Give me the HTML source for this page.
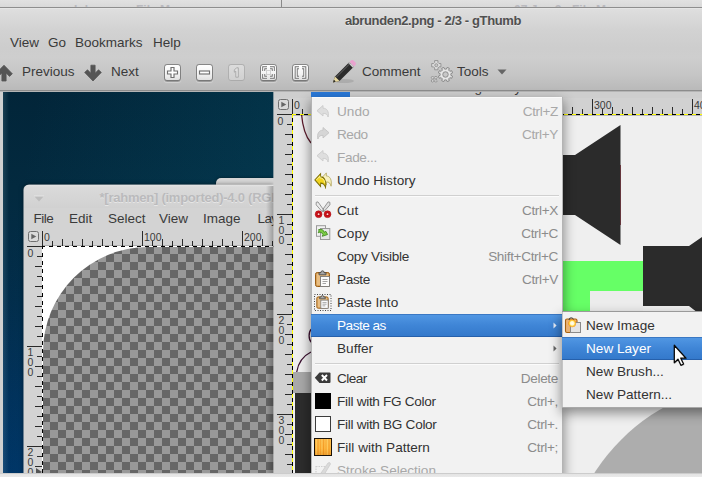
<!DOCTYPE html>
<html>
<head>
<meta charset="utf-8">
<title>abrunden2.png - 2/3 - gThumb</title>
<style>
html,body{margin:0;padding:0;}
body{width:702px;height:477px;overflow:hidden;background:#d6d6d6;font-family:"Liberation Sans","DejaVu Sans",sans-serif;}
#root{position:relative;width:702px;height:477px;overflow:hidden;background:#d6d6d6;}
#root div,#root span,#root svg{position:absolute;}
.t{white-space:nowrap;line-height:16px;font-size:13.5px;color:#3c3c3c;}
/* ---------- top strip ---------- */
#topstrip{left:0;top:0;width:702px;height:7px;background:linear-gradient(#e1e1e1,#d9d9d9);overflow:hidden;}
#topstrip .ft{font-size:12px;font-weight:bold;color:#b9b9be;top:2.500px;line-height:14px;white-space:nowrap;}
#topline{left:0;top:7px;width:702px;height:1px;background:#8e8e8e;}
#topnotch{left:281px;top:0;width:1px;height:7px;background:#8a8a8a;}
/* ---------- gThumb header ---------- */
#hdr{left:0;top:8px;width:702px;height:82px;background:linear-gradient(#ececec 0px,#dedede 1px,#d2d2d2 22px,#cdcdcd 40px,#cecece 50px,#c6c6c6 66px,#bababa 81px);}
#hdrline{left:0;top:90px;width:702px;height:2px;background:linear-gradient(#8c8c8c 0,#8c8c8c 1px,#b4b4b4 1px,#b4b4b4 2px);}
#title{left:333px;top:13px;width:200px;text-align:center;font-weight:bold;font-size:13px;letter-spacing:-0.36px;color:#505050;text-shadow:0 1px 0 rgba(255,255,255,.45);}
.mb{font-size:13.5px;color:#3a3a3a;}
.zb{top:64.500px;width:15px;height:15px;border-radius:2.500px;background:linear-gradient(#ffffff,#f4f4f4 55%,#e0e0e0);box-shadow:0 0 0 .9px rgba(105,105,105,.7),0 1.200px 0 .8px rgba(110,110,110,.55),0 2px 1px .5px rgba(255,255,255,.3);}
.zb.dis{background:linear-gradient(#dcdcdc,#d0d0d0);box-shadow:0 0 0 .9px rgba(150,150,150,.5);}
/* ---------- image area ---------- */
#imgarea{left:3px;top:92px;width:271px;height:381px;background:linear-gradient(90deg,rgba(160,205,220,.15) 0,rgba(160,205,220,0) 6px),linear-gradient(100deg,rgba(6,85,110,0) 10%,rgba(6,95,120,.30) 100%),linear-gradient(180deg,#022539 0%,#032a3f 25%,#022d4b 55%,#01315b 80%,#003466 100%);}
#imgleft{left:0;top:92px;width:3px;height:382px;background:#d0d0d0;}
/* ---------- rahmen window ---------- */
#backtab{left:216px;top:178px;width:70px;height:12px;background:#d6d6d6;border-radius:5px 0 0 0;box-shadow:0 0 3px rgba(0,0,0,.5);}
#rw{left:24px;top:185px;width:250px;height:289px;background:#d4d4d4;border-radius:5px 0 0 0;overflow:hidden;box-shadow:0 0 0 .6px rgba(215,215,215,.85),0 0 5px rgba(0,0,0,.55);}
#rw-title{left:0;top:0;width:250px;height:23px;background:linear-gradient(#e4e4e4 0,#dadada 2px,#d1d1d1 23px);}
#rw-tt{left:75.500px;top:5px;font-weight:bold;font-size:13px;letter-spacing:-0.24px;color:#bababc;text-shadow:0 1px 0 #e6e6e6;}
#rw-menu{left:0;top:23px;width:250px;height:22px;background:#d3d3d3;}
.rm{top:26px;font-size:13.5px;color:#3a3a3a;}
#rw-rul{left:0;top:45px;width:250px;height:244px;background:#d3d3d3;}
#rw-htick{left:18px;top:45px;width:232px;height:16px;
 background:
  repeating-linear-gradient(90deg,#2a2a2a 0,#2a2a2a 1px,transparent 1px,transparent 100px) 0 1px/100% 15px no-repeat,
  repeating-linear-gradient(90deg,#2a2a2a 0,#2a2a2a 1px,transparent 1px,transparent 20px) 0 9px/100% 7px no-repeat,
  repeating-linear-gradient(90deg,#2a2a2a 0,#2a2a2a 1px,transparent 1px,transparent 20px) 10px 11px/100% 5px no-repeat;}
#rw-vtick{left:0px;top:61px;width:18px;height:228px;
 background:
  repeating-linear-gradient(180deg,#2a2a2a 0,#2a2a2a 1px,transparent 1px,transparent 100px) 3px 0/15px 100% no-repeat,
  repeating-linear-gradient(180deg,#2a2a2a 0,#2a2a2a 1px,transparent 1px,transparent 20px) 11px 0/7px 100% no-repeat,
  repeating-linear-gradient(180deg,#2a2a2a 0,#2a2a2a 1px,transparent 1px,transparent 20px) 13px 10px/5px 100% no-repeat;}
.rl{font-size:10.5px;line-height:11.5px;color:#3a3a3a;white-space:nowrap;}
.rl.v{text-align:center;width:9px;line-height:10px;}
#rw-canvas{left:18px;top:61px;width:240px;height:240px;overflow:hidden;}
.ants-h{height:1px;background:repeating-linear-gradient(90deg,#000 0,#000 3px,#fff 3px,#fff 7px,#000 7px,#000 8px);box-shadow:0 -0.500px 0 rgba(0,0,0,.35);}
.ants-v{width:1px;background:repeating-linear-gradient(180deg,#000 0,#000 3px,#fff 3px,#fff 7px,#000 7px,#000 8px);}
#rw-shadow{left:266px;top:186px;width:8px;height:288px;background:linear-gradient(90deg,rgba(0,0,0,0),rgba(0,0,0,.28));}
/* ---------- main GIMP window ---------- */
#gw{left:274px;top:92px;width:428px;height:382px;background:#d1d1d1;overflow:hidden;}
#gw-mb{left:0;top:0;width:428px;height:6px;background:#cecece;}
#gw-edit{left:37px;top:0;width:39px;height:5px;background:#2a79d8;}
.gmb{top:-12px;font-size:13.5px;color:#3c3c3c;}
#gw-htick{left:18px;top:6px;width:410px;height:16px;
 background:
  repeating-linear-gradient(90deg,#2a2a2a 0,#2a2a2a 1px,transparent 1px,transparent 100px) 0 1px/100% 15px no-repeat,
  repeating-linear-gradient(90deg,#2a2a2a 0,#2a2a2a 1px,transparent 1px,transparent 20px) 0 9px/100% 7px no-repeat,
  repeating-linear-gradient(90deg,#2a2a2a 0,#2a2a2a 1px,transparent 1px,transparent 20px) 10px 11px/100% 5px no-repeat;}
#gw-vtick{left:0px;top:22px;width:18px;height:360px;
 background:
  repeating-linear-gradient(180deg,#2a2a2a 0,#2a2a2a 1px,transparent 1px,transparent 100px) 3px 0/15px 100% no-repeat,
  repeating-linear-gradient(180deg,#2a2a2a 0,#2a2a2a 1px,transparent 1px,transparent 20px) 11px 0/7px 100% no-repeat,
  repeating-linear-gradient(180deg,#2a2a2a 0,#2a2a2a 1px,transparent 1px,transparent 20px) 13px 10px/5px 100% no-repeat;}
.ants-y-h{height:1px;background:repeating-linear-gradient(90deg,#ffff00 0,#ffff00 4px,#000 4px,#000 8px);box-shadow:0 .5px 0 rgba(0,0,0,.45);}
.ants-y-v{width:1px;background:repeating-linear-gradient(180deg,#ffff00 0,#ffff00 4px,#000 4px,#000 8px);}
/* ---------- menus ---------- */
#menu{left:311px;top:97px;width:252px;height:380px;background:#f2f2f2;box-shadow:inset 1px 0 0 #b4b4b4,inset -1px 0 0 #b4b4b4,inset 0 1px 0 #fafafa,0 5px 11px 1px rgba(0,0,0,.42);}
#sub{left:562px;top:312px;width:151px;height:95px;background:#f2f2f2;box-shadow:0 -1px 0 #9a9a9a,inset 1px 0 0 #c4c4c4,0 1px 0 #a8a8a8,0 5px 11px 1px rgba(0,0,0,.42);}
.hl{left:0;width:100%;height:22px;background:linear-gradient(#5298e4,#3f85d6 50%,#3378ca);box-shadow:inset 0 1px 0 rgba(40,95,170,.55),inset 0 -1px 0 rgba(30,80,150,.6);}
.sep{left:4px;right:4px;height:1px;background:#d0d0d0;border-bottom:1px solid #fbfbfb;}
.mi{left:26px;font-size:13.6px;color:#333;}
.si{left:24px;font-size:13.6px;color:#333;}
.sc{right:5px;font-size:13.6px;color:#8c8c8c;letter-spacing:-0.35px;}
.mi.dis,.sc.dis{color:#a8a8a8;}
.mi.sel,.si.sel{color:#ffffff;}
#bottom{left:0;top:473px;width:702px;height:4px;background:linear-gradient(#b4b4b4 0px,#e4e4e4 1px,#e9e9e9 4px);}
</style>
</head>
<body>
<div id="root">
  <!-- remnants of windows above -->
  <div id="topstrip">
    <span class="ft" style="left:74px;">Inkscape - File Manager</span>
    <span class="ft" style="left:514px;">07 Jan 2 - File Manager</span>
  </div>
  <div id="topnotch"></div>
  <div id="topline"></div>

  <!-- gThumb header: title, menubar, toolbar -->
  <div id="hdr"></div>
  <div id="hdrline"></div>
  <div id="title" class="t">abrunden2.png - 2/3 - gThumb</div>

  <!-- gThumb menubar -->
  <span class="t mb" style="left:10px;top:35px;">View</span>
  <span class="t mb" style="left:48px;top:35px;">Go</span>
  <span class="t mb" style="left:75px;top:35px;">Bookmarks</span>
  <span class="t mb" style="left:153px;top:35px;">Help</span>

  <!-- gThumb toolbar -->
  <svg style="left:-5px;top:64px;" width="18" height="18" viewBox="0 0 18 18"><path d="M9 1.200 L17.300 9.800 L14.500 12.400 L11.100 8.900 L11.100 17 L6.900 17 L6.900 8.900 L3.500 12.400 L0.700 9.800 Z" fill="#555" stroke="#555" stroke-width=".8" stroke-linejoin="round"/></svg>
  <span class="t mb" style="left:22px;top:64px;">Previous</span>
  <svg style="left:84px;top:64px;" width="18" height="18" viewBox="0 0 18 18"><path d="M9 17 L17.300 8.400 L14.500 5.800 L11.100 9.300 L11.100 1.200 L6.900 1.200 L6.900 9.300 L3.500 5.800 L0.700 8.400 Z" fill="#555" stroke="#555" stroke-width=".8" stroke-linejoin="round"/></svg>
  <span class="t mb" style="left:111px;top:64px;">Next</span>

  <div class="zb" style="left:165px;"><svg width="15" height="15" viewBox="0 0 15 15" style="left:0;top:0"><path d="M6 2.500h3v3.500h3.500v3H9v3.500H6V9H2.500V6H6z" fill="#fff" stroke="#707070" stroke-width="1.150"/></svg></div>
  <div class="zb" style="left:197px;"><svg width="15" height="15" viewBox="0 0 15 15" style="left:0;top:0"><rect x="2.500" y="6" width="10" height="3" fill="#fff" stroke="#707070" stroke-width="1.150"/></svg></div>
  <div class="zb dis" style="left:229px;"><svg width="15" height="15" viewBox="0 0 15 15" style="left:0;top:0"><path d="M5.300 5 L7.500 2.800 H9.300 V12.200 H6.800 V6.200 L5.300 7.200 Z" fill="#e0e0e0" stroke="#a6a6a6" stroke-width="0.900"/></svg></div>
  <div class="zb" style="left:261px;"><svg width="15" height="15" viewBox="0 0 15 15" style="left:0;top:0"><path d="M2.700 6V2.700H6 M9 2.700h3.300V6 M12.300 9v3.300H9 M6 12.300H2.700V9" fill="none" stroke="#707070" stroke-width="3"/><path d="M2.700 6V2.700H6 M9 2.700h3.300V6 M12.300 9v3.300H9 M6 12.300H2.700V9" fill="none" stroke="#fff" stroke-width="1.100"/><rect x="5.500" y="5.500" width="4" height="4" fill="none" stroke="#9a9a9a" stroke-width=".8" stroke-dasharray="1 1"/></svg></div>
  <div class="zb" style="left:293px;"><svg width="15" height="15" viewBox="0 0 15 15" style="left:0;top:0"><path d="M6 2.700H3.200V12.300H6 M9 2.700h2.800V12.300H9" fill="none" stroke="#707070" stroke-width="3"/><path d="M6 2.700H3.200V12.300H6 M9 2.700h2.800V12.300H9" fill="none" stroke="#fff" stroke-width="1.100"/></svg></div>

  <!-- comment pencil -->
  <svg style="left:330px;top:58px;" width="28" height="28" viewBox="0 0 28 28">
    <ellipse cx="14" cy="23" rx="10" ry="2" fill="#9a9a9a" opacity=".55"/>
    <path d="M3 24.500 L5 18.500 L19.500 4 L24 8.500 L9.500 23 Z" fill="#2b2b2b"/>
    <path d="M3 24.500 L5 18.500 L9.500 23 Z" fill="#e8d9a0"/>
    <path d="M3 24.500 L3.900 21.800 L5.800 23.600 Z" fill="#222"/>
    <path d="M19.500 4 L21.200 2.300 Q22.300 1.400 23.500 2.500 L25.500 4.500 Q26.500 5.700 25.600 6.800 L24 8.500 Z" fill="#e9a2cf"/>
    <path d="M18.300 5.200 L19.500 4 L24 8.500 L22.800 9.700 Z" fill="#cfcfcf"/>
    <path d="M6.500 19 L20 5.500" stroke="#666" stroke-width="1" fill="none"/>
  </svg>
  <span class="t mb" style="left:362px;top:64px;">Comment</span>
  <!-- tools gears -->
  <svg style="left:429px;top:59px;" width="26" height="26" viewBox="0 0 26 26">
    <path d="M10.04 4.55 L11.91 4.54 L11.91 7.86 L10.04 7.85 L8.95 8.94 L8.96 10.81 L5.64 10.81 L5.65 8.94 L4.56 7.85 L2.69 7.86 L2.69 4.54 L4.56 4.55 L5.65 3.46 L5.64 1.59 L8.96 1.59 L8.95 3.46 Z" fill="#dcdcdc" stroke="#8e8e8e" stroke-width=".9" stroke-linejoin="round"/>
    <circle cx="7.300" cy="6.200" r="1.500" fill="#c9c9c9" stroke="#8e8e8e" stroke-width=".8"/>
    <path d="M7.27 20.94 L8.35 21.93 L6.93 23.35 L5.94 22.27 L4.46 22.27 L3.47 23.35 L2.05 21.93 L3.13 20.94 L3.13 19.46 L2.05 18.47 L3.47 17.05 L4.46 18.13 L5.94 18.13 L6.93 17.05 L8.35 18.47 L7.27 19.46 Z" fill="#d6d6d6" stroke="#8e8e8e" stroke-width=".9" stroke-linejoin="round"/>
    <rect x="4.200" y="19.200" width="2" height="2" fill="#c6c6c6" stroke="#8e8e8e" stroke-width=".6"/>
    <path d="M21.84 16.29 L23.60 17.20 L22.72 19.31 L20.84 18.72 L19.72 19.84 L20.31 21.72 L18.20 22.60 L17.29 20.84 L15.71 20.84 L14.80 22.60 L12.69 21.72 L13.28 19.84 L12.16 18.72 L10.28 19.31 L9.40 17.20 L11.16 16.29 L11.16 14.71 L9.40 13.80 L10.28 11.69 L12.16 12.28 L13.28 11.16 L12.69 9.28 L14.80 8.40 L15.71 10.16 L17.29 10.16 L18.20 8.40 L20.31 9.28 L19.72 11.16 L20.84 12.28 L22.72 11.69 L23.60 13.80 L21.84 14.71 Z" fill="#dedede" stroke="#8a8a8a" stroke-width="1" stroke-linejoin="round"/>
    <circle cx="16.500" cy="15.500" r="2.700" fill="#c8c8c8" stroke="#8a8a8a" stroke-width=".9"/>
    <circle cx="16.500" cy="15.500" r="4.300" fill="none" stroke="#f4f4f4" stroke-width=".7" opacity=".7"/>
  </svg>
  <span class="t mb" style="left:457px;top:64px;">Tools</span>
  <svg style="left:496px;top:68px;" width="12" height="8" viewBox="0 0 12 8"><path d="M1.500 1.500 H10.500 L6 6.500 Z" fill="#666"/></svg>

  <!-- image viewer area -->
  <div id="imgleft"></div>
  <div id="imgarea"></div>

  <!-- window tab peeking out behind -->
  <div id="backtab"></div>
  <!-- small GIMP window "rahmen" -->
  <div id="rw">
    <div id="rw-title"></div>
    <svg style="left:9px;top:10px;" width="12" height="8" viewBox="0 0 12 8"><path d="M1 1 H11 L6 6.500 Z" fill="#bdbdbd"/><path d="M1 1 H11" stroke="#e6e6e6" stroke-width="1"/></svg>
    <span class="t" id="rw-tt">*[rahmen] (imported)-4.0 (RGB color, 1 layer) 200x200 – GIMP</span>
    <div id="rw-menu"></div>
    <span class="t rm" style="left:9.500px;letter-spacing:-0.5px;">File</span>
    <span class="t rm" style="left:45px;">Edit</span>
    <span class="t rm" style="left:84px;">Select</span>
    <span class="t rm" style="left:135px;">View</span>
    <span class="t rm" style="left:179px;">Image</span>
    <span class="t rm" style="left:233.500px;letter-spacing:-0.6px;">Layer</span>
    <!-- rulers -->
    <div id="rw-rul"></div>
    <div id="rw-htick"></div>
    <div id="rw-vtick"></div>
    <svg style="left:4px;top:46px;" width="12" height="12" viewBox="0 0 12 12"><rect x="0.500" y="0.500" width="10" height="10" rx="2" fill="#dadada" stroke="#707070"/><path d="M3.300 2.800 L8.300 5.500 L3.300 8.200 Z" fill="#666"/></svg>
    <span class="rl" style="left:20px;top:47px;">0</span>
    <span class="rl" style="left:120px;top:47px;">100</span>
    <span class="rl" style="left:220px;top:47px;">200</span>
    <span class="rl v" style="left:2px;top:63px;">0</span>
    <span class="rl v" style="left:2px;top:162px;">1<br>0<br>0</span>
    <span class="rl v" style="left:2px;top:262px;">2<br>0<br>0</span>
    <!-- canvas -->
    <div id="rw-canvas">
      <svg style="left:0;top:0" width="240" height="240" viewBox="0 0 240 240">
        <defs>
          <pattern id="chk" x="0" y="0" width="16" height="16" patternUnits="userSpaceOnUse">
            <rect width="16" height="16" fill="#666666"/>
            <rect x="0" y="0" width="8" height="8" fill="#999999"/>
            <rect x="8" y="8" width="8" height="8" fill="#999999"/>
          </pattern>
        </defs>
        <rect width="240" height="240" fill="#ffffff"/>
        <path d="M106 1 H240 V240 H1 V106 A105 105 0 0 1 106 1 Z" fill="url(#chk)"/>
      </svg>
    </div>
    <div class="ants-h" style="left:18px;top:61px;width:232px;"></div>
    <div class="ants-v" style="left:18px;top:61px;height:228px;"></div>
    <svg style="left:11px;top:283px;" width="8" height="8" viewBox="0 0 8 8"><path d="M1 0 L7 4 L1 8 Z" fill="#555"/></svg>
  </div>
  <div id="rw-shadow"></div>
  <div style="left:273px;top:92px;width:1px;height:382px;background:#cfcfcf;opacity:.65;"></div>
  <!-- main GIMP window -->
  <div id="gw">
    <div id="gw-mb"></div>
    <div id="gw-edit"></div>
    <span class="t gmb" style="left:178px;">Image</span><span class="t gmb" style="left:225.500px;">Layer</span>
    <div id="gw-htick"></div>
    <div id="gw-vtick"></div>
    <svg style="left:4px;top:7px;" width="12" height="12" viewBox="0 0 12 12"><rect x="0.500" y="0.500" width="10" height="10" rx="2" fill="#dadada" stroke="#707070"/><path d="M3.300 2.800 L8.300 5.500 L3.300 8.200 Z" fill="#666"/></svg>
    <span class="rl" style="left:20px;top:8px;">0</span>
    <span class="rl" style="left:320px;top:8px;">300</span>
    <span class="rl" style="left:420px;top:8px;">400</span>
    <span class="rl v" style="left:3.500px;top:24px;text-align:left;">0</span>
    <span class="rl v" style="left:3px;top:123px;">1<br>0<br>0</span>
    <span class="rl v" style="left:3px;top:223px;">2<br>0<br>0</span>
    <span class="rl v" style="left:3px;top:323px;">3<br>0<br>0</span>
    <!-- canvas : origin (293,113) in page = (19,21) here -->
    <svg id="gw-canvas" style="left:19px;top:22px;" width="409" height="360" viewBox="0 1 409 360">
      <rect width="409" height="361" fill="#efefef"/>
      <!-- big gray disc bottom right -->
      <circle cx="469" cy="468" r="199.500" fill="#adadad"/>
      <!-- speaker shape -->
      <path d="M270 42 H282 L327.500 12 V132 L282 102 H270 Z" fill="#2b2b2b"/>
      <path d="M327.500 52 V112" stroke="#5a2028" stroke-width=".8"/>
      <!-- green box with cut-out -->
      <rect x="270" y="148" width="80" height="50" fill="#66ff66"/>
      <rect x="297" y="178" width="53" height="20" fill="#ececec"/>
      <!-- second dark shape -->
      <path d="M350 133 H396 L409 124 V203 L396 193 H350 Z" fill="#2b2b2b"/>
      <!-- strip left of the menu -->
      <path d="M8.500 1 C9.500 13 12 23 18 30" fill="none" stroke="#5c1c2c" stroke-width="1.300"/>
      <path d="M3.700 259 C5 251 10 243 18 239" fill="none" stroke="#3c1030" stroke-width="1.300"/>
      <path d="M18.500 216 C15.300 219 15.300 226.500 18.500 229.500" fill="none" stroke="#3c1030" stroke-width="1.300"/>
      <rect x="0" y="259" width="18" height="21" fill="#a9a9a9"/>
      <rect x="2" y="280" width="16" height="81" fill="#2d2d2d"/>
    </svg>
    <div class="ants-y-h" style="left:18px;top:22px;width:410px;"></div>
    <div class="ants-y-v" style="left:18px;top:22px;height:360px;"></div>
  </div>
  <!-- Edit menu -->
  <div id="menu">
    <div class="hl" style="top:217px;height:23px;"></div>
    <div class="sep" style="top:98px;"></div>
    <div class="sep" style="top:266px;"></div>
    <span class="t mi dis" style="top:7px;">Undo</span><span class="t sc dis" style="top:7px;">Ctrl+Z</span>
    <span class="t mi dis" style="top:30px;letter-spacing:-0.5px;">Redo</span><span class="t sc dis" style="top:30px;">Ctrl+Y</span>
    <span class="t mi dis" style="top:53px;letter-spacing:-0.35px;">Fade...</span>
    <span class="t mi" style="top:76px;">Undo History</span>
    <span class="t mi" style="top:106px;">Cut</span><span class="t sc" style="top:106px;">Ctrl+X</span>
    <span class="t mi" style="top:129px;">Copy</span><span class="t sc" style="top:129px;">Ctrl+C</span>
    <span class="t mi" style="top:152px;letter-spacing:-0.28px;">Copy Visible</span><span class="t sc" style="top:152px;">Shift+Ctrl+C</span>
    <span class="t mi" style="top:175px;letter-spacing:-0.35px;">Paste</span><span class="t sc" style="top:175px;">Ctrl+V</span>
    <span class="t mi" style="top:198px;">Paste Into</span>
    <span class="t mi sel" style="top:221px;letter-spacing:-0.5px;">Paste as</span>
    <svg style="left:241.500px;top:225px;" width="5" height="7" viewBox="0 0 5 7"><path d="M0.500 0.500 L3.600 3.500 L0.500 6.500 Z" fill="#e8eef8"/></svg>
    <span class="t mi" style="top:244px;">Buffer</span>
    <svg style="left:241.500px;top:248px;" width="5" height="7" viewBox="0 0 5 7"><path d="M0.500 0.500 L3.600 3.500 L0.500 6.500 Z" fill="#666"/></svg>
    <span class="t mi" style="top:274px;letter-spacing:-0.55px;">Clear</span><span class="t sc" style="top:274px;">Delete</span>
    <span class="t mi" style="top:297px;letter-spacing:-0.3px;">Fill with FG Color</span><span class="t sc" style="top:297px;">Ctrl+,</span>
    <span class="t mi" style="top:320px;letter-spacing:-0.3px;">Fill with BG Color</span><span class="t sc" style="top:320px;">Ctrl+.</span>
    <span class="t mi" style="top:343px;">Fill with Pattern</span><span class="t sc" style="top:343px;">Ctrl+;</span>
    <span class="t mi dis" style="top:366px;">Stroke Selection...</span>
    <!-- icons (menu origin = 311,97) -->
    <svg width="0" height="0" style="left:0;top:0"><defs>
      <path id="undoarrow" d="M0.500 5.700 L6.500 0.500 L6.500 3.200 C10.500 3.200 12.700 6.500 11.600 12 C10.700 9.300 9.500 8.300 6.500 8.300 L6.500 11 Z"/>
      <g id="clipb">
        <rect x="1.500" y="2.500" width="14" height="14" rx="1.800" fill="#d9a55e" stroke="#9a5c14"/>
        <rect x="3" y="4" width="11" height="11" fill="#ecc68f" opacity=".75"/>
        <path d="M5 4.800 V2.800 H6.800 Q6.800 0.800 8.500 0.800 Q10.200 0.800 10.200 2.800 H12 V4.800 Z" fill="#a8a8a8" stroke="#4a4a4a" stroke-width=".9"/>
      </g>
    </defs></svg>
    <!-- undo / redo / fade (disabled) -->
    <svg style="left:5px;top:8px;" width="14" height="13" viewBox="-0.500 0 14 13"><use href="#undoarrow" fill="#dedede" stroke="#cbcbcb" stroke-width=".9"/></svg>
    <svg style="left:5px;top:30px;" width="14" height="13" viewBox="-0.500 0 14 13"><use href="#undoarrow" fill="#d6d6d6" stroke="#c4c4c4" stroke-width=".9" transform="translate(13,0) scale(-1,1)"/></svg>
    <svg style="left:5px;top:53px;" width="14" height="13" viewBox="-0.500 0 14 13"><use href="#undoarrow" fill="#dedede" stroke="#cbcbcb" stroke-width=".9"/></svg>
    <!-- undo history -->
    <svg style="left:3px;top:75px;" width="20" height="17" viewBox="0 0 20 17">
      <g transform="translate(6.300,0.300) scale(.93,1.160)"><use href="#undoarrow" fill="#f7f0c0" stroke="#b3a85e" stroke-width=".8"/></g>
      <g transform="translate(0.400,1) scale(.96,1.220)"><use href="#undoarrow" fill="#f1d41e" stroke="#7d6f06" stroke-width=".9"/>
      <path d="M2.200 5.600 L5.700 2.600 L5.700 4 C8.500 4 10.200 5.300 10.700 8" fill="none" stroke="#fbf4a8" stroke-width=".8"/></g>
    </svg>
    <!-- cut -->
    <svg style="left:2px;top:104px;" width="20" height="18" viewBox="0 0 20 18">
      <path d="M16.900 1.300 L15.100 0.900 L9 9.600 L10.800 10.800 L16.900 3.900 Z" fill="#dfdfdf" stroke="#808080" stroke-width=".8" stroke-linejoin="round"/>
      <path d="M3.200 1.300 L5 0.900 L11.100 9.600 L9.300 10.800 L3.200 3.900 Z" fill="#ececec" stroke="#808080" stroke-width=".8" stroke-linejoin="round"/>
      <circle cx="10.050" cy="9.300" r=".7" fill="#777"/>
      <circle cx="5.600" cy="13.200" r="3.400" fill="#d8141c" stroke="#a50d13" stroke-width=".6"/>
      <circle cx="14.500" cy="13.200" r="3.400" fill="#d8141c" stroke="#a50d13" stroke-width=".6"/>
      <circle cx="5.600" cy="13.200" r="1.700" fill="none" stroke="#9b0a10" stroke-width=".7"/>
      <circle cx="14.500" cy="13.200" r="1.700" fill="none" stroke="#9b0a10" stroke-width=".7"/>
      <circle cx="5.600" cy="13.200" r=".9" fill="#f7dede"/>
      <circle cx="14.500" cy="13.200" r=".9" fill="#f7dede"/>
    </svg>
    <!-- copy -->
    <svg style="left:5px;top:128px;" width="16" height="16" viewBox="0 0 16 16">
      <rect x="0.500" y="0.700" width="9" height="10.600" fill="#f2f2f2" stroke="#9a9a9a"/>
      <rect x="4.500" y="3.500" width="9.300" height="11" fill="#e6e6e6" stroke="#9a9a9a"/>
      <path d="M2.600 4.600 C5.500 3.800 7.800 5 8.300 7.300 L9.800 6.300 L11.600 9.500 L6.300 11.300 L7 9.300 C5.800 7.300 4.200 6.600 2.200 7.800 C2.900 6.600 3 5.600 2.600 4.600 Z" fill="#7ccb45" stroke="#3a8419" stroke-width=".8" stroke-linejoin="round"/>
    </svg>
    <!-- paste -->
    <svg style="left:3px;top:173px;" width="18" height="18" viewBox="0 0 18 18">
      <use href="#clipb"/>
      <rect x="6.500" y="6.500" width="9" height="10" fill="#fbfbfb" stroke="#7a7a7a" stroke-width=".9"/>
      <path d="M8.500 9.500 H13.500 M8.500 11.500 H13.500 M8.500 13.500 H12" stroke="#9a9a9a" stroke-width=".9"/>
    </svg>
    <!-- paste into -->
    <svg style="left:3px;top:196px;" width="18" height="18" viewBox="0 0 18 18">
      <rect x="0.500" y="1.500" width="16.500" height="16" fill="none" stroke="#444" stroke-width="1" stroke-dasharray="1 1.500"/>
      <g transform="translate(1.500,1.800) scale(.82)"><use href="#clipb"/>
      <rect x="6.500" y="6.500" width="9" height="10" fill="#fbfbfb" stroke="#7a7a7a" stroke-width="1"/>
      <path d="M8.500 9.500 H13.500 M8.500 11.500 H13.500 M8.500 13.500 H12" stroke="#9a9a9a" stroke-width="1"/></g>
    </svg>
    <!-- clear -->
    <svg style="left:3px;top:275px;" width="17" height="12" viewBox="0 0 17 12">
      <path d="M0.800 5.700 L5.500 0.500 H15.500 Q16.500 0.500 16.500 1.500 V10 Q16.500 11 15.500 11 H5.500 Z" fill="#3b3b3b"/>
      <path d="M7.800 3 L13 8.500 M13 3 L7.800 8.500" stroke="#fff" stroke-width="1.900"/>
    </svg>
    <!-- FG / BG / pattern -->
    <div style="left:4px;top:296px;width:16px;height:16px;background:#000;"></div>
    <div style="left:4px;top:319px;width:14px;height:14px;background:#fff;border:1px solid #3c3c3c;"></div>
    <div style="left:3px;top:341px;width:16px;height:16px;border:1px solid #1a1208;background:
       linear-gradient(180deg,rgba(255,230,150,.15) 0,rgba(255,190,60,0) 60%,rgba(170,80,0,.22) 100%),
       repeating-linear-gradient(90deg,#f9a52c 0,#ffc858 1.500px,#f59a22 3px,#ffbe48 4.300px,#f9a52c 5.500px);"></div>
    <!-- stroke selection (disabled) -->
    <svg style="left:4px;top:364px;" width="18" height="16" viewBox="0 0 18 16">
      <rect x="1" y="5.500" width="9" height="9" fill="none" stroke="#cfcfcf" stroke-width="1.200" stroke-dasharray="1.500 1"/>
      <path d="M6 12 L13 2 Q15 0.500 15.500 3 L9.500 13 Z" fill="#dadada" stroke="#c8c8c8" stroke-width=".7"/>
    </svg>
  </div>

  <!-- Paste as submenu -->
  <div id="sub">
    <div class="hl" style="top:25px;height:23px;"></div>
    <span class="t si" style="top:6px;">New Image</span>
    <span class="t si sel" style="top:29px;">New Layer</span>
    <span class="t si" style="top:52px;">New Brush...</span>
    <span class="t si" style="top:75px;">New Pattern...</span>
    <!-- New Image icon -->
    <svg style="left:2px;top:5px;" width="20" height="18" viewBox="0 0 20 18">
      <defs><radialGradient id="glow"><stop offset="0" stop-color="#ffffff"/><stop offset=".42" stop-color="#fff6c8"/><stop offset=".62" stop-color="#ffd23a"/><stop offset=".85" stop-color="#f59a1a" stop-opacity=".75"/><stop offset="1" stop-color="#f07a10" stop-opacity="0"/></radialGradient></defs>
      <rect x="1.500" y="2" width="11.500" height="13.500" rx="1.500" fill="#e9b274" stroke="#a8620e" stroke-width="1.100"/>
      <path d="M5 3 Q5 0.800 7.200 0.800 Q9.400 0.800 9.400 3" fill="none" stroke="#3a3a3a" stroke-width="1"/>
      <rect x="6.500" y="5.500" width="10" height="10" fill="#e4e4e4" stroke="#8a8a8a"/>
      <circle cx="8.200" cy="6.300" r="4.400" fill="url(#glow)"/>
    </svg>
  </div>

  <!-- mouse pointer -->
  <svg style="left:672px;top:343px;" width="18" height="24" viewBox="0 0 18 24">
    <path d="M2.300 2.300 L2.300 19.800 L6 16.300 L8.900 22.300 L11.600 21 L8.800 15.200 L14 15.200 Z" fill="#000" opacity=".25" transform="translate(.8,1)"/>
    <path d="M2.300 2.300 L2.300 19.800 L6 16.300 L8.900 22.300 L11.600 21 L8.800 15.200 L14 15.200 Z" fill="#fdfdfd" stroke="#0a0a0a" stroke-width="1.300" stroke-linejoin="round"/>
  </svg>

  <div id="bottom"></div>
</div>
</body>
</html>
